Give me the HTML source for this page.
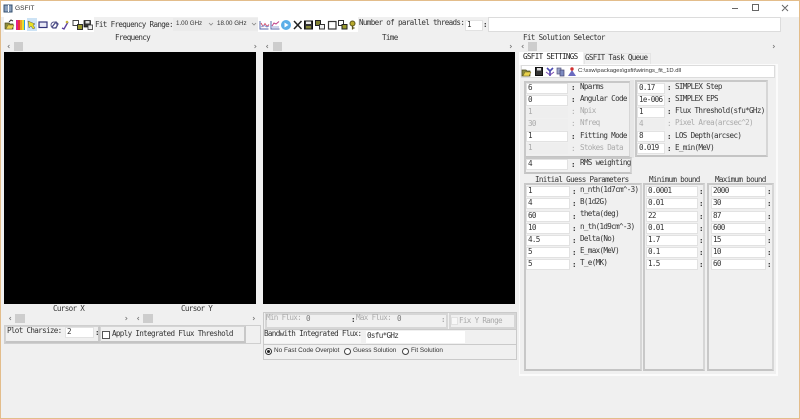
<!DOCTYPE html>
<html><head><meta charset="utf-8"><title>GSFIT</title>
<style>
html,body{margin:0;padding:0}
body{width:800px;height:419px;overflow:hidden;position:relative;background:#f0f0f0;font-family:"DejaVu Sans Mono","Liberation Mono",monospace;font-size:7.6px;letter-spacing:-.675px;color:#333}
div{position:absolute;box-sizing:border-box}
#w{left:0;top:0;width:800px;height:419px;filter:blur(.3px)}
.t{white-space:pre;line-height:10px;height:10px;color:#333}
.d{color:#aaa}
.s{font-family:"Liberation Sans",sans-serif;font-size:6.4px;letter-spacing:0;color:#333}
.i{background:#fff;border:1px solid #e2e2e2;line-height:8px;padding-left:1px;white-space:pre;color:#333;height:11px}
.n{background:#eeeeee;border-color:#eeeeee;color:#aaa}
.g{border:2px solid #c8c8c8;border-right-color:#d6d6d6;border-bottom-color:#c4c4c4}
.h{border:1px solid #cfcfcf}
.b{background:#fff}
.c{background:#000}
.th{background:#cdcdcd;width:9px;height:9px}
</style></head><body>
<div id="w">
<div class="b" style="left:1px;top:1px;width:798px;height:16px"></div>
<div class="s" style="left:15px;top:4px;line-height:10px;font-size:6.6px">GSFIT</div>
<!-- toolbar -->
<div class="b" style="left:4px;top:17px;width:90px;height:15px"></div>
<div class="t" style="left:95px;top:20px">Fit Frequency Range:</div>
<div style="left:173px;top:18px;width:42px;height:13px;background:#ebebeb"></div>
<div style="left:215px;top:18px;width:43px;height:13px;background:#ebebeb"></div>
<div class="s" style="left:176px;top:19px;line-height:10px;font-size:6.2px">1.00 GHz</div>
<div class="s" style="left:217px;top:19px;line-height:10px;font-size:6.2px">18.00 GHz</div>
<div class="b" style="left:258px;top:17px;width:100px;height:15px"></div>
<div class="t" style="left:359px;top:18px">Number of parallel threads:</div>
<div class="i" style="left:465px;top:20px;width:18px;height:11px">1</div>
<div class="t" style="left:483px;top:20px;font-weight:bold">:</div>
<div class="b" style="left:488px;top:17px;width:293px;height:15px;border:1px solid #dcdcdc"></div>
<!-- titles -->
<div class="t" style="left:115px;top:33px">Frequency</div>
<div class="t" style="left:382px;top:33px">Time</div>
<div class="t" style="left:523px;top:33px">Fit Solution Selector</div>
<div class="t" style="left:53px;top:304px">Cursor X</div>
<div class="t" style="left:181px;top:304px">Cursor Y</div>
<!-- scroll thumbs -->
<div class="th" style="left:14px;top:42px"></div>
<div class="th" style="left:273px;top:42px"></div>
<div class="th" style="left:528px;top:42px"></div>
<div class="th" style="left:15px;top:314px;width:10px"></div>
<div class="th" style="left:143px;top:314px;width:10px"></div>
<!-- canvases -->
<div class="c" style="left:4px;top:52px;width:252px;height:252px"></div>
<div class="c" style="left:263px;top:52px;width:252px;height:252px"></div>
<!-- bottom-left -->
<div class="h" style="left:4px;top:325px;width:257px;height:19px;border-width:1px"></div>
<div class="g" style="left:5px;top:326px;width:95px;height:17px;border-width:1px 2px 2px 1px;border-color:#d4d4d4 #c8c8c8 #c4c4c4 #d4d4d4"></div>
<div class="g" style="left:100px;top:326px;width:146px;height:17px;border-width:1px 2px 2px 1px;border-color:#d4d4d4 #c8c8c8 #c4c4c4 #d4d4d4"></div>
<div class="t" style="left:7px;top:326px">Plot Charsize:</div>
<div class="i" style="left:65px;top:327px;width:29px;height:11px">2</div>
<div class="t" style="left:95px;top:328px;font-weight:bold">:</div>
<div style="left:102px;top:331px;width:8px;height:8px;border:1px solid #555;background:#fff"></div>
<div class="t" style="left:112px;top:329px">Apply Integrated Flux Threshold</div>
<!-- middle bottom -->
<div class="h" style="left:263px;top:312px;width:254px;height:48px;border-color:#cacaca"></div>
<div class="h" style="left:265px;top:313px;width:183px;height:16px;border:2px solid #d6d6d6"></div>
<div class="h" style="left:449px;top:313px;width:67px;height:16px;border:2px solid #d6d6d6"></div>
<div class="t d" style="left:266px;top:313px">Min Flux:</div>
<div class="t" style="left:306px;top:314px;color:#777">0</div>
<div class="t" style="left:351px;top:315px;font-weight:bold">:</div>
<div class="t d" style="left:356px;top:313px">Max Flux:</div>
<div class="t" style="left:397px;top:314px;color:#777">0</div>
<div class="t d" style="left:441px;top:315px;font-weight:bold">:</div>
<div style="left:451px;top:317px;width:7px;height:8px;background:#f8f8f8;border:1px solid #e2e2e2"></div>
<div class="t d" style="left:459px;top:316px">Fix Y Range</div>
<div style="left:263px;top:329px;width:254px;height:1px;background:#cacaca"></div>
<div style="left:263px;top:344px;width:254px;height:1px;background:#cacaca"></div>
<div class="b" style="left:264px;top:331px;width:97px;height:12px;background:#f7f7f7"></div>
<div class="t" style="left:264px;top:329px">Bandwith Integrated Flux:</div>
<div class="i" style="left:366px;top:331px;width:99px;height:12px;border:0;padding-left:1px;line-height:10px">0sfu*GHz</div>
<div style="left:265px;top:348px;width:7px;height:7px;border:1px solid #333;border-radius:50%;background:#fff"></div>
<div style="left:267px;top:350px;width:3px;height:3px;border-radius:50%;background:#222"></div>
<div class="s" style="left:274px;top:346px;line-height:10px">No Fast Code Overplot</div>
<div style="left:344px;top:348px;width:7px;height:7px;border:1px solid #444;border-radius:50%;background:#fff"></div>
<div class="s" style="left:353px;top:346px;line-height:10px">Guess Solution</div>
<div style="left:402px;top:348px;width:7px;height:7px;border:1px solid #444;border-radius:50%;background:#fff"></div>
<div class="s" style="left:411px;top:346px;line-height:10px">Fit Solution</div>
<!-- tabs -->
<div style="left:519px;top:64px;width:259px;height:312px;border:1px solid #fbfbfb;border-width:1px 2px 2px 1px"></div>
<div style="left:584px;top:53px;width:67px;height:11px;background:#f0f0f0;border:1px solid #e4e4e4;border-bottom:0"></div>
<div class="b" style="left:519px;top:52px;width:64px;height:13px"></div>
<div class="t" style="left:523px;top:52px;color:#222">GSFIT SETTINGS</div>
<div class="t" style="left:585px;top:53px">GSFIT Task Queue</div>
<div class="b" style="left:521px;top:65px;width:254px;height:13px;border:1px solid #dcdcdc"></div>
<div class="s" style="left:578px;top:66px;line-height:10px;font-size:5.9px">C:\ssw\packages\gsfit\wirings_fit_1D.dll</div>
<!-- upper groups -->
<div class="g" style="left:524px;top:81px;width:107px;height:77px"></div>
<div style="left:630px;top:80px;width:4px;height:78px;background:#e6e6e6"></div>
<div class="g" style="left:635px;top:80px;width:133px;height:77px"></div>
<div class="g" style="left:524px;top:157px;width:108px;height:17px"></div>

<div class="i" style="left:526px;top:83px;width:42px">6</div><div class="t" style="left:571px;top:83px;font-weight:bold">:</div><div class="t" style="left:580px;top:82px">Nparms</div>
<div class="i" style="left:526px;top:95px;width:42px">0</div><div class="t" style="left:571px;top:95px;font-weight:bold">:</div><div class="t" style="left:580px;top:94px">Angular Code</div>
<div class="i n" style="left:526px;top:107px;width:42px">1</div><div class="t d" style="left:571px;top:107px">:</div><div class="t d" style="left:580px;top:106px">Npix</div>
<div class="i n" style="left:526px;top:119px;width:42px">30</div><div class="t d" style="left:571px;top:119px">:</div><div class="t d" style="left:580px;top:118px">Nfreq</div>
<div class="i" style="left:526px;top:131px;width:42px">1</div><div class="t" style="left:571px;top:132px;font-weight:bold">:</div><div class="t" style="left:580px;top:131px">Fitting Mode</div>
<div class="i n" style="left:526px;top:143px;width:42px">1</div><div class="t d" style="left:571px;top:144px">:</div><div class="t d" style="left:580px;top:143px">Stokes Data</div>
<div class="i" style="left:526px;top:159px;width:42px">4</div><div class="t" style="left:571px;top:160px;font-weight:bold">:</div><div class="t" style="left:580px;top:158px">RMS weighting</div>

<div class="i" style="left:637px;top:83px;width:28px">0.17</div><div class="t" style="left:667px;top:83px;font-weight:bold">:</div><div class="t" style="left:675px;top:82px">SIMPLEX Step</div>
<div class="i" style="left:637px;top:95px;width:28px">1e-006</div><div class="t" style="left:667px;top:95px;font-weight:bold">:</div><div class="t" style="left:675px;top:94px">SIMPLEX EPS</div>
<div class="i" style="left:637px;top:107px;width:28px">1</div><div class="t" style="left:667px;top:107px;font-weight:bold">:</div><div class="t" style="left:675px;top:106px">Flux Threshold(sfu*GHz)</div>
<div class="i n" style="left:637px;top:119px;width:28px">4</div><div class="t d" style="left:667px;top:119px">:</div><div class="t d" style="left:675px;top:118px">Pixel Area(arcsec^2)</div>
<div class="i" style="left:637px;top:131px;width:28px">8</div><div class="t" style="left:667px;top:132px;font-weight:bold">:</div><div class="t" style="left:675px;top:131px">LOS Depth(arcsec)</div>
<div class="i" style="left:637px;top:143px;width:28px">0.019</div><div class="t" style="left:667px;top:144px;font-weight:bold">:</div><div class="t" style="left:675px;top:143px">E_min(MeV)</div>

<!-- lower groups -->
<div class="t" style="left:535px;top:175px">Initial Guess Parameters</div>
<div class="t" style="left:649px;top:175px">Minimum bound</div>
<div class="t" style="left:715px;top:175px">Maximum bound</div>
<div class="g" style="left:524px;top:183px;width:118px;height:188px"></div>
<div class="g" style="left:643px;top:183px;width:62px;height:188px"></div>
<div class="g" style="left:707px;top:183px;width:67px;height:188px"></div>

<div class="i" style="left:526px;top:186px;width:44px">1</div><div class="t" style="left:572px;top:187px;font-weight:bold">:</div><div class="t" style="left:580px;top:185px">n_nth(1d7cm^-3)</div>
<div class="i" style="left:526px;top:198px;width:44px">4</div><div class="t" style="left:572px;top:199px;font-weight:bold">:</div><div class="t" style="left:580px;top:197px">B(1d2G)</div>
<div class="i" style="left:526px;top:211px;width:44px">60</div><div class="t" style="left:572px;top:212px;font-weight:bold">:</div><div class="t" style="left:580px;top:209px">theta(deg)</div>
<div class="i" style="left:526px;top:223px;width:44px">10</div><div class="t" style="left:572px;top:224px;font-weight:bold">:</div><div class="t" style="left:580px;top:222px">n_th(1d9cm^-3)</div>
<div class="i" style="left:526px;top:235px;width:44px">4.5</div><div class="t" style="left:572px;top:236px;font-weight:bold">:</div><div class="t" style="left:580px;top:234px">Delta(No)</div>
<div class="i" style="left:526px;top:247px;width:44px">5</div><div class="t" style="left:572px;top:248px;font-weight:bold">:</div><div class="t" style="left:580px;top:246px">E_max(MeV)</div>
<div class="i" style="left:526px;top:259px;width:44px">5</div><div class="t" style="left:572px;top:260px;font-weight:bold">:</div><div class="t" style="left:580px;top:258px">T_e(MK)</div>

<div class="i" style="left:646px;top:186px;width:52px">0.0001</div><div class="t" style="left:699px;top:187px;font-weight:bold">:</div>
<div class="i" style="left:646px;top:198px;width:52px">0.01</div><div class="t" style="left:699px;top:199px;font-weight:bold">:</div>
<div class="i" style="left:646px;top:211px;width:52px">22</div><div class="t" style="left:699px;top:212px;font-weight:bold">:</div>
<div class="i" style="left:646px;top:223px;width:52px">0.01</div><div class="t" style="left:699px;top:224px;font-weight:bold">:</div>
<div class="i" style="left:646px;top:235px;width:52px">1.7</div><div class="t" style="left:699px;top:236px;font-weight:bold">:</div>
<div class="i" style="left:646px;top:247px;width:52px">0.1</div><div class="t" style="left:699px;top:248px;font-weight:bold">:</div>
<div class="i" style="left:646px;top:259px;width:52px">1.5</div><div class="t" style="left:699px;top:260px;font-weight:bold">:</div>

<div class="i" style="left:711px;top:186px;width:55px">2000</div><div class="t" style="left:767px;top:187px;font-weight:bold">:</div>
<div class="i" style="left:711px;top:198px;width:55px">30</div><div class="t" style="left:767px;top:199px;font-weight:bold">:</div>
<div class="i" style="left:711px;top:211px;width:55px">87</div><div class="t" style="left:767px;top:212px;font-weight:bold">:</div>
<div class="i" style="left:711px;top:223px;width:55px">600</div><div class="t" style="left:767px;top:224px;font-weight:bold">:</div>
<div class="i" style="left:711px;top:235px;width:55px">15</div><div class="t" style="left:767px;top:236px;font-weight:bold">:</div>
<div class="i" style="left:711px;top:247px;width:55px">10</div><div class="t" style="left:767px;top:248px;font-weight:bold">:</div>
<div class="i" style="left:711px;top:259px;width:55px">60</div><div class="t" style="left:767px;top:260px;font-weight:bold">:</div>

<!-- icons and glyphs -->
<svg width="800" height="419" viewBox="0 0 800 419" style="position:absolute;left:0;top:0" fill="none">
<!-- title icon -->
<rect x="4" y="5" width="8" height="7" fill="#8aa0bd" stroke="#35506f" stroke-width="1"/><rect x="8" y="5" width="1" height="7" fill="#fff"/>
<!-- window controls -->
<path d="M732 8.5h6M752.5 4.500h6v6h-6zM782 5l6 6M788 5l-6 6" stroke="#666" stroke-width="1"/>
<!-- folder -->
<path d="M5 29v-6h4l1 1h3v5z" fill="#8a8a3c" stroke="#4a4a20" stroke-width=".7"/><path d="M6 29l2-4h6l-2 4z" fill="#e9d24c" stroke="#6f6420" stroke-width=".5"/><path d="M9 22l2-2 2 1" stroke="#333"/>
<!-- spectrum -->
<rect x="16" y="20" width="2" height="10" fill="#e0208c"/><rect x="18" y="20" width="2" height="10" fill="#e93535"/><rect x="20" y="20" width="2" height="10" fill="#f0a020"/><rect x="22" y="20" width="2" height="10" fill="#e4e030"/><rect x="24" y="20" width="1" height="10" fill="#2a9fe0"/>
<!-- selected arrow -->
<rect x="27" y="18" width="10" height="13" fill="#cde3f5"/><path d="M28 21l7 3-2 1 2 3-2 1-2-3-2 2z" fill="#e8e020" stroke="#555" stroke-width=".5"/>
<!-- rect -->
<rect x="39" y="22" width="8" height="5.500" fill="#e8e8f5" stroke="#33337a" stroke-width="1.200"/>
<!-- lasso -->
<path d="M52 27l4-5 2 2-2 4h-3z" stroke="#4b4b88" stroke-width="1.300"/><circle cx="54" cy="25" r="3" stroke="#55558a" stroke-width="1"/>
<!-- check -->
<path d="M62 28l2 1 4-7" stroke="#5c3fa0" stroke-width="1.400"/><circle cx="67" cy="22" r="1.300" fill="#c9b43a"/>
<!-- copy save -->
<rect x="73" y="20.500" width="5.500" height="5" fill="#fff" stroke="#333" stroke-width=".9"/><rect x="77.500" y="24.500" width="5" height="5" fill="#9a9a2c" stroke="#222" stroke-width=".9"/>
<rect x="84" y="20.500" width="6.500" height="6.500" fill="#333" stroke="#111" stroke-width=".7"/><rect x="85.500" y="21" width="4" height="2.500" fill="#ddd"/><rect x="88" y="25" width="4.500" height="4.500" fill="#eee" stroke="#333" stroke-width=".8"/>
<!-- combo arrows -->
<path d="M209 23l2 2 2-2M252 23l2 2 2-2" stroke="#888" stroke-width=".8"/>
<!-- chart icons -->
<path d="M260 21v8h8.500" stroke="#5566aa" stroke-width="1"/><path d="M261 23l2 3.500 2-3 2 3 2-2" stroke="#d04a6a" stroke-width=".9"/><path d="M261 27l3-1.500 3 1.500 2-1" stroke="#7a9ad8" stroke-width=".8"/>
<path d="M271 21v8h8.500" stroke="#5566aa" stroke-width="1"/><path d="M272 26l2-3 2 1 3-2.500" stroke="#c0408a" stroke-width="1"/><path d="M272 27h7" stroke="#8090d0" stroke-width=".8"/>
<!-- play -->
<circle cx="286" cy="25" r="5" fill="#5aaee8"/><path d="M284.500 22.500l4 2.500-4 2.500z" fill="#fff"/>
<!-- X -->
<path d="M294 21l7.500 8M301.500 21l-7.500 8" stroke="#222" stroke-width="1.500"/>
<!-- save -->
<rect x="304.500" y="21" width="8" height="8" fill="#333" stroke="#111"/><rect x="306" y="21.500" width="5" height="2.500" fill="#eee"/><rect x="306" y="26" width="5" height="2.500" fill="#8a8a3a"/>
<!-- multi -->
<rect x="315.500" y="20.500" width="5" height="5" fill="#7f7f30" stroke="#222"/><rect x="319.500" y="24.500" width="5" height="4.500" fill="#eee" stroke="#333"/>
<rect x="328.500" y="21.500" width="7.500" height="7.500" fill="#fff" stroke="#333" stroke-width="1.200"/>
<rect x="338.500" y="20.500" width="5" height="5" fill="#fff" stroke="#333"/><rect x="342" y="24.500" width="5" height="4.500" fill="#9a9a2c" stroke="#222"/>
<!-- key -->
<circle cx="352.500" cy="23.500" r="2.500" fill="#b7a92c" stroke="#5b5520"/><path d="M352.500 25.500v4M352.500 28h2" stroke="#5b5520" stroke-width="1.200"/>
<!-- scroll arrows -->
<path d="M9.500 45l-1.500 1.500 1.500 1.500M254.500 45l1.500 1.500-1.500 1.500M268 45l-1.500 1.500 1.500 1.500M510 45l1.500 1.500-1.500 1.500M523.500 45l-1.500 1.500 1.500 1.500M773 45l1.500 1.500-1.500 1.500M11 317l-1.500 1.500 1.500 1.500M125.500 317l1.500 1.500-1.500 1.500M139 317l-1.500 1.500 1.500 1.500M253 317l1.500 1.500-1.500 1.500" stroke="#777" stroke-width=".8"/>
<!-- path row icons -->
<path d="M522 76v-6h4l1 1h3v5z" fill="#8a8a3c" stroke="#4a4a20" stroke-width=".7"/><path d="M523 76l2-4h6l-2 4z" fill="#e9d24c" stroke="#6f6420" stroke-width=".5"/>
<rect x="535.500" y="67.500" width="7" height="8" fill="#333" stroke="#111"/><rect x="537" y="68" width="4" height="2.500" fill="#ddd"/>
<path d="M547 68l3 3 3-3M550 71v5" stroke="#4a4ab0" stroke-width="1.600"/><path d="M546 72l4 3 4-3" stroke="#7a4ab0" stroke-width="1"/>
<rect x="557" y="68" width="4" height="6" fill="#9aa4c8" stroke="#555580" stroke-width=".7"/><rect x="560" y="70" width="4" height="6" fill="#7c8ac0" stroke="#444470" stroke-width=".7"/>
<path d="M568 76l4-6 4 6z" fill="#6a6ac0"/><circle cx="572" cy="69" r="1.700" fill="#d03030"/>
</svg>
</div>
<!-- window border -->
<div style="left:0;top:0;width:800px;height:419px;border:1px solid #e3bd8b;pointer-events:none"></div>
</body></html>
